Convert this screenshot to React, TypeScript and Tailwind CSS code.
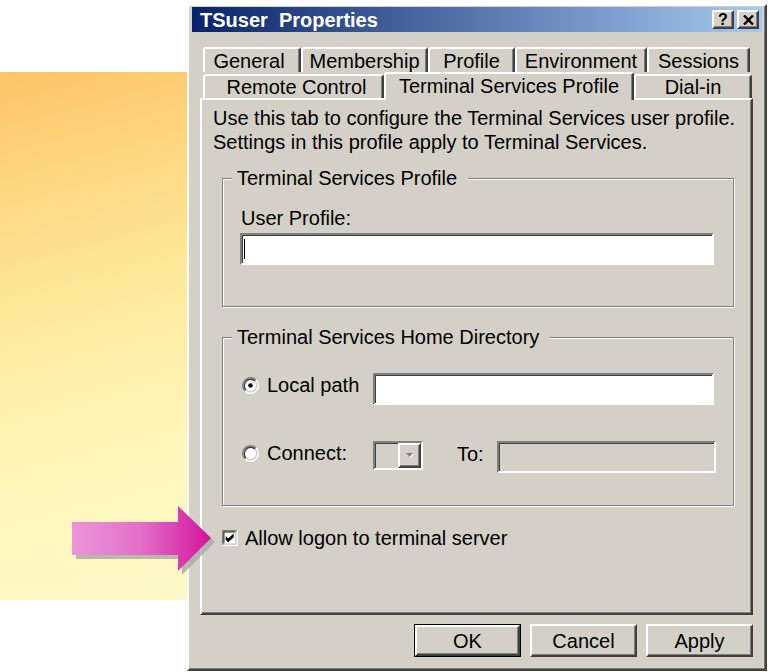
import React from "react";

const raised =
  "border-2 border-t-white border-l-white border-r-[#404040] border-b-[#404040] shadow-[inset_-1px_-1px_0_#808080]";
const sunken =
  "border-2 border-t-[#808080] border-l-[#808080] border-r-white border-b-white shadow-[inset_1px_1px_0_#404040]";
const tabBase =
  "flex items-center justify-center text-[20px] leading-none border-t-2 border-l-2 border-r-2 border-t-white border-l-white border-r-[#404040] shadow-[inset_-1px_0_0_#808080] rounded-t-[3px] bg-[#d4d0c8]";

function Radio({ checked }: { checked?: boolean }) {
  return (
    <svg width="17" height="17" viewBox="0 0 12 12" className="shrink-0">
      <circle cx="6" cy="6" r="4.2" fill="white" />
      <path d="M2.11 9.89 A5.5 5.5 0 0 1 9.89 2.11" stroke="#808080" fill="none" />
      <path d="M9.89 2.11 A5.5 5.5 0 0 1 2.11 9.89" stroke="#ffffff" fill="none" />
      <path d="M2.82 9.18 A4.5 4.5 0 0 1 9.18 2.82" stroke="#404040" fill="none" />
      <path d="M9.18 2.82 A4.5 4.5 0 0 1 2.82 9.18" stroke="#d4d0c8" fill="none" />
      {checked && <circle cx="6" cy="6" r="1.6" fill="black" />}
    </svg>
  );
}

function CheckBox() {
  return (
    <svg width="16" height="16" viewBox="0 0 13 13" className="shrink-0">
      <rect x="2" y="2" width="9" height="9" fill="white" />
      <path d="M0.5 12 V0.5 H12" stroke="#808080" fill="none" />
      <path d="M1.5 11 V1.5 H11" stroke="#404040" fill="none" />
      <path d="M0.5 12.5 H12.5 V0.5" stroke="#ffffff" fill="none" />
      <path d="M1.5 11.5 H11.5 V1.5" stroke="#d4d0c8" fill="none" />
      <polygon points="3,5 5,7 9.5,2.8 9.5,5.8 5,10 3,8" fill="black" />
    </svg>
  );
}

function TitleBtn({ children }: { children: React.ReactNode }) {
  return (
    <div
      className={`w-[22px] h-[19px] bg-[#d4d0c8] flex items-center justify-center ${raised}`}
    >
      {children}
    </div>
  );
}

function Btn({ label, def }: { label: string; def?: boolean }) {
  const inner = (
    <div
      className={`h-full w-full flex items-center justify-center text-[20px] leading-none bg-[#d4d0c8] ${raised}`}
    >
      {label}
    </div>
  );
  if (def) {
    return <div className="w-[107px] h-[33px] border border-black">{inner}</div>;
  }
  return <div className="w-[107px] h-[33px]">{inner}</div>;
}

export default function App() {
  return (
    <div className="relative w-[768px] h-[672px] bg-white overflow-hidden flex font-['Liberation_Sans',Arial,sans-serif] text-black">
      {/* slide yellow panel */}
      <div className="w-[187px] shrink-0 pt-[72px]">
        <div className="h-[528px] bg-[linear-gradient(165deg,#fcc463_0%,#fdd882_22%,#fdeda3_50%,#fef6bc_75%,#fef8c6_100%)]" />
      </div>

      {/* dialog */}
      <div
        className={`mt-[4px] w-[580px] h-[667px] shrink-0 bg-[#d4d0c8] px-[3px] pt-[1px] flex flex-col ${raised}`}
      >
        {/* title bar */}
        <div className="h-[25px] shrink-0 flex items-center pl-[8px] pr-[3px] bg-[linear-gradient(to_right,#0a246a,#a6caf0)]">
          <span className="text-white font-bold text-[20px] leading-none whitespace-pre">
            TSuser  Properties
          </span>
          <div className="ml-auto flex gap-[3px]">
            <TitleBtn>
              <span className="text-[16px] font-bold leading-none">?</span>
            </TitleBtn>
            <TitleBtn>
              <svg width="11" height="10" viewBox="0 0 11 10">
                <path d="M1 0.5 L10 9.5 M10 0.5 L1 9.5" stroke="black" strokeWidth="2.4" />
              </svg>
            </TitleBtn>
          </div>
        </div>

        <div className="mt-[15px] ml-[8px] mr-[9px] flex flex-col">
          {/* tab row 1 */}
          <div className="flex pl-[3px] h-[25px]">
            <div className={`${tabBase} w-[98px] h-[25px] pr-[6px]`}>General</div>
            <div className={`${tabBase} w-[127px] h-[25px]`}>Membership</div>
            <div className={`${tabBase} w-[87px] h-[25px]`}>Profile</div>
            <div className={`${tabBase} w-[132px] h-[25px]`}>Environment</div>
            <div className={`${tabBase} w-[103px] h-[25px]`}>Sessions</div>
          </div>
          {/* tab row 2 */}
          <div className="flex pl-[3px] h-[26px] items-end">
            <div className={`${tabBase} w-[181px] h-[24px] pl-[6px]`}>Remote Control</div>
            <div className={`${tabBase} relative z-10 w-[250px] h-[28px] -mb-[2px] pb-[3px]`}>
              Terminal Services Profile
            </div>
            <div className={`${tabBase} w-[118px] h-[24px]`}>Dial-in</div>
          </div>

          {/* panel */}
          <div className={`h-[517px] flex flex-col ${raised}`}>
            <p className="mt-[6px] ml-[11px] text-[20px] leading-[24px]">
              Use this tab to configure the Terminal Services user profile.
              <br />
              Settings in this profile apply to Terminal Services.
            </p>

            <fieldset className="mt-[12px] ml-[20px] mr-[17px] px-0 pt-[16px] pb-[41px] border border-[#808080] shadow-[inset_1px_1px_0_white,1px_1px_0_white]">
              <legend className="ml-[9px] pl-[5px] pr-[11px] bg-[#d4d0c8] text-[20px] leading-[24px]">
                Terminal Services Profile
              </legend>
              <div className="ml-[18px] text-[20px] leading-[24px]">User Profile:</div>
              <div
                className={`mt-[3px] ml-[17px] w-[474px] h-[32px] bg-white flex items-center ${sunken}`}
              >
                <span className="ml-[2px] w-[1px] h-[20px] bg-black" />
              </div>
            </fieldset>

            <fieldset className="mt-[18px] ml-[20px] mr-[17px] px-0 pt-[24px] pb-[32px] border border-[#808080] shadow-[inset_1px_1px_0_white,1px_1px_0_white]">
              <legend className="ml-[9px] pl-[5px] pr-[11px] bg-[#d4d0c8] text-[20px] leading-[24px]">
                Terminal Services Home Directory
              </legend>
              <div className="flex items-center h-[32px]">
                <div className="w-[150px] pl-[19px] mb-[8px] flex items-center gap-[8px] text-[20px] leading-none">
                  <Radio checked />
                  <span>Local path</span>
                </div>
                <div className={`w-[341px] h-[32px] bg-white ${sunken}`} />
              </div>
              <div className="mt-[36px] flex items-center h-[32px]">
                <div className="w-[150px] pl-[19px] mb-[8px] flex items-center gap-[8px] text-[20px] leading-none">
                  <Radio />
                  <span>Connect:</span>
                </div>
                <div className={`w-[50px] h-[29px] mb-[3px] flex justify-end ${sunken}`}>
                  <div className={`w-[23px] h-full flex items-center justify-center bg-[#d4d0c8] ${raised}`}>
                    <svg width="10" height="7" viewBox="0 0 10 7">
                      <polygon points="2,2 9,2 5.5,6" fill="white" />
                      <polygon points="1,1 8,1 4.5,5" fill="#808080" />
                    </svg>
                  </div>
                </div>
                <span className="ml-[34px] mb-[6px] text-[20px] leading-none">To:</span>
                <div className={`ml-[13px] w-[219px] h-[32px] bg-[#d4d0c8] ${sunken}`} />
              </div>
            </fieldset>

            <div className="mt-[20px] ml-[20px] h-[24px] flex items-center gap-[7px] text-[20px] leading-none">
              <CheckBox />
              <span>Allow logon to terminal server</span>
            </div>
          </div>

          {/* buttons */}
          <div className="mt-[9px] flex justify-end gap-[9px]">
            <Btn label="OK" def />
            <Btn label="Cancel" />
            <Btn label="Apply" />
          </div>
        </div>
      </div>

      {/* pointer arrow */}
      <svg
        className="absolute left-[66px] top-[502px]"
        width="152"
        height="76"
        viewBox="0 0 152 76"
      >
        <defs>
          <linearGradient id="ag" x1="0" y1="0" x2="1" y2="0">
            <stop offset="0" stopColor="#eb95da" />
            <stop offset="0.5" stopColor="#e26fc8" />
            <stop offset="1" stopColor="#d4129a" />
          </linearGradient>
        </defs>
        <polygon
          points="10,24 116,24 116,8 149,40 116,73 116,57 10,57"
          fill="#a8a8a8"
          opacity="0.8"
        />
        <polygon
          points="6,20 112,20 112,4 145,36 112,69 112,53 6,53"
          fill="url(#ag)"
        />
      </svg>
    </div>
  );
}
